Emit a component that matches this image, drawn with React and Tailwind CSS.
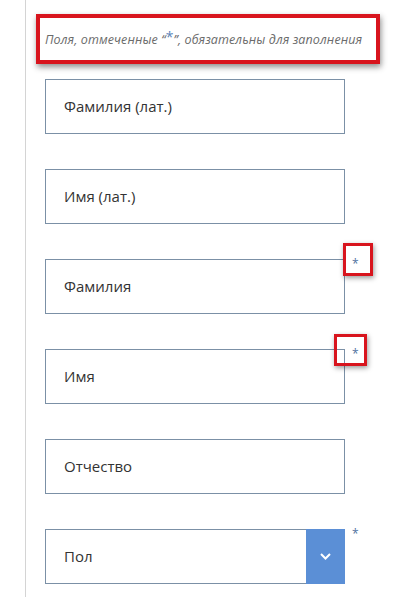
const fields = [
	{ label: "Фамилия (лат.)" },
	{ label: "Имя (лат.)" },
	{ label: "Фамилия", required: true, mark: "left-[298px] top-[-16px] w-[30px] h-[33px]" },
	{ label: "Имя", required: true, mark: "left-[289px] top-[-15px] w-[33px] h-[32px]" },
	{ label: "Отчество" },
];

function Star() {
	return <span className="absolute left-[307px] top-[-1px] text-[12px] leading-none text-[#4f72a0]">*</span>;
}

function Field({ label, required, mark }) {
	return (
		<div className="relative ml-[19px] w-[300px]">
			<div className="flex h-[55px] items-center border border-[#7b90a6] bg-white pl-[18px] text-[15px] text-[#333]">
				{label}
			</div>
			{required && <Star />}
			{mark && (
				<div className={"absolute border-[3px] border-[#d8141d] shadow-[1px_2px_5px_rgba(0,0,0,0.4)] " + mark} />
			)}
		</div>
	);
}

export default function App() {
	return (
		<div className="h-[597px] w-[413px] overflow-hidden bg-white" style={{ fontFamily: '"Open Sans", "Liberation Sans", sans-serif' }}>
			<div className="ml-[25px] flex h-full flex-col gap-[35px] border-l border-[#d4d4d4] pt-[14px]">
				<div className="-mb-[20px] ml-[10px] flex h-[50px] w-[344px] items-center border-4 border-[#d8141d] pl-[5px] shadow-[1px_3px_6px_rgba(0,0,0,0.45)]">
					<span className="text-[12.5px] italic tracking-[0.1px] text-[#6b6b6b]">
						Поля, отмеченные “<span className="relative top-[-2px] text-[14px] not-italic text-[#5b84b8]">*</span>”, обязательны для заполнения
					</span>
				</div>
				{fields.map(f => <Field key={f.label} {...f} />)}
				<div className="relative ml-[19px] w-[300px]">
					<div className="flex h-[55px] items-stretch border border-[#7b90a6] bg-white text-[15px] text-[#333]">
						<div className="flex flex-1 items-center pl-[18px]">Пол</div>
						<div className="-my-px -mr-px flex w-[39px] items-center justify-center bg-[#5b8fd6]">
							<svg width="11" height="7" viewBox="0 0 11 7" fill="none">
								<path d="M1 1l4.5 4.5L10 1" stroke="white" strokeWidth="2" />
							</svg>
						</div>
					</div>
					<Star />
				</div>
			</div>
		</div>
	);
}
